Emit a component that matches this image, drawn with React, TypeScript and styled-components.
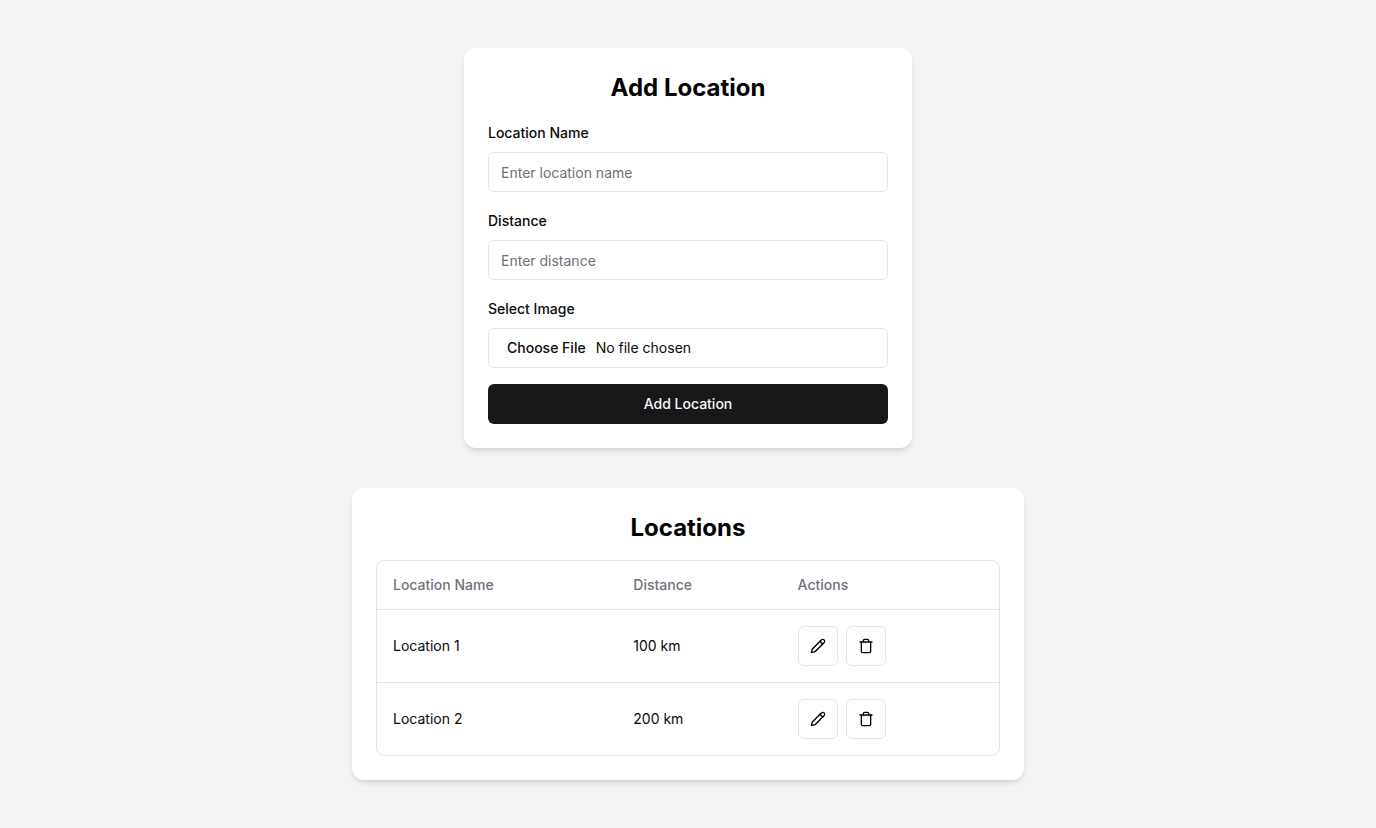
import React from "react";
import styled, { createGlobalStyle } from "styled-components";

const GlobalStyle = createGlobalStyle`
  *, *::before, *::after { box-sizing: border-box; }
  body {
    margin: 0;
    background: #f3f4f6;
    color: #09090b;
    font-family: Inter, "Liberation Sans", sans-serif;
    font-size: 14px;
    line-height: 20px;
  }
`;

const Page = styled.main`
  min-height: 100vh;
  display: flex;
  flex-direction: column;
  align-items: center;
  justify-content: center;
  gap: 40px;
  padding: 24px;
  background: #f3f4f6;
`;

const Card = styled.section<{ $width: number }>`
  width: 100%;
  max-width: ${(p) => p.$width}px;
  padding: 24px;
  border-radius: 12px;
  background: #fff;
  box-shadow: 0 4px 6px -1px rgb(0 0 0 / 0.1), 0 2px 4px -2px rgb(0 0 0 / 0.1);
`;

const Title = styled.h2`
  margin: 0 0 16px;
  font-size: 24px;
  line-height: 32px;
  font-weight: 700;
  text-align: center;
  color: #000;
`;

const Form = styled.form`
  display: flex;
  flex-direction: column;
  gap: 16px;
`;

const Field = styled.div`
  font-size: 16px;
  line-height: 24px;
`;

const Label = styled.label`
  font-size: 14px;
  line-height: 14px;
  font-weight: 500;
`;

const Input = styled.input`
  display: flex;
  width: 100%;
  height: 40px;
  margin: 8px 0 0;
  padding: 8px 12px;
  border: 1px solid #e4e4e7;
  border-radius: 6px;
  background: #fff;
  color: inherit;
  font-family: inherit;
  font-size: 14px;
  line-height: 20px;

  &::placeholder {
    color: #71717a;
    opacity: 1;
  }

  &::file-selector-button {
    border: 0;
    background: transparent;
    color: inherit;
    font: inherit;
    font-weight: 500;
  }
`;

const SubmitButton = styled.button`
  height: 40px;
  border: 0;
  border-radius: 6px;
  background: #18181b;
  color: #fafafa;
  font: inherit;
  font-weight: 500;
  cursor: pointer;
`;

const TableFrame = styled.div`
  overflow: hidden;
  border: 1px solid #e4e4e7;
  border-radius: 8px;
`;

const Table = styled.table`
  width: 100%;
  border-collapse: collapse;
`;

const Row = styled.tr`
  tbody & {
    border-top: 1px solid #e4e4e7;
  }
`;

const HeadCell = styled.th`
  height: 48px;
  padding: 0 16px;
  text-align: left;
  font-weight: 500;
  color: #71717a;
`;

const Cell = styled.td`
  padding: 16px;
`;

const Actions = styled.div`
  display: flex;
  gap: 8px;
`;

const IconButton = styled.button`
  display: inline-flex;
  align-items: center;
  justify-content: center;
  width: 40px;
  height: 40px;
  padding: 0;
  border: 1px solid #e4e4e7;
  border-radius: 6px;
  background: #fff;
  color: #000;
  cursor: pointer;
`;

const Icon = styled.svg.attrs({ viewBox: "0 0 24 24", "aria-hidden": true })`
  width: 16px;
  height: 16px;
  fill: none;
  stroke: currentColor;
  stroke-width: 2;
  stroke-linecap: round;
  stroke-linejoin: round;
`;

const PencilIcon = () => (
  <Icon>
    <path d="M17 3a2.85 2.83 0 1 1 4 4L7.5 20.5 2 22l1.5-5.5Z" />
    <path d="m15 5 4 4" />
  </Icon>
);

const TrashIcon = () => (
  <Icon>
    <path d="M3 6h18" />
    <path d="M19 6v14c0 1-1 2-2 2H7c-1 0-2-1-2-2V6" />
    <path d="M8 6V4c0-1 1-2 2-2h4c1 0 2 1 2 2v2" />
  </Icon>
);

const locations = [
  { name: "Location 1", distance: "100 km" },
  { name: "Location 2", distance: "200 km" },
];

export default function App() {
  return (
    <>
      <GlobalStyle />
      <Page>
        <Card $width={448}>
          <Title>Add Location</Title>
          <Form onSubmit={(e) => e.preventDefault()}>
            <Field>
              <Label htmlFor="name">Location Name</Label>
              <Input id="name" type="text" placeholder="Enter location name" />
            </Field>
            <Field>
              <Label htmlFor="distance">Distance</Label>
              <Input id="distance" type="text" placeholder="Enter distance" />
            </Field>
            <Field>
              <Label htmlFor="image">Select Image</Label>
              <Input id="image" type="file" />
            </Field>
            <SubmitButton type="submit">Add Location</SubmitButton>
          </Form>
        </Card>
        <Card $width={672}>
          <Title>Locations</Title>
          <TableFrame>
            <Table>
              <thead>
                <Row>
                  <HeadCell>Location Name</HeadCell>
                  <HeadCell>Distance</HeadCell>
                  <HeadCell>Actions</HeadCell>
                </Row>
              </thead>
              <tbody>
                {locations.map((l) => (
                  <Row key={l.name}>
                    <Cell>{l.name}</Cell>
                    <Cell>{l.distance}</Cell>
                    <Cell>
                      <Actions>
                        <IconButton type="button" aria-label={`Edit ${l.name}`}>
                          <PencilIcon />
                        </IconButton>
                        <IconButton type="button" aria-label={`Delete ${l.name}`}>
                          <TrashIcon />
                        </IconButton>
                      </Actions>
                    </Cell>
                  </Row>
                ))}
              </tbody>
            </Table>
          </TableFrame>
        </Card>
      </Page>
    </>
  );
}
